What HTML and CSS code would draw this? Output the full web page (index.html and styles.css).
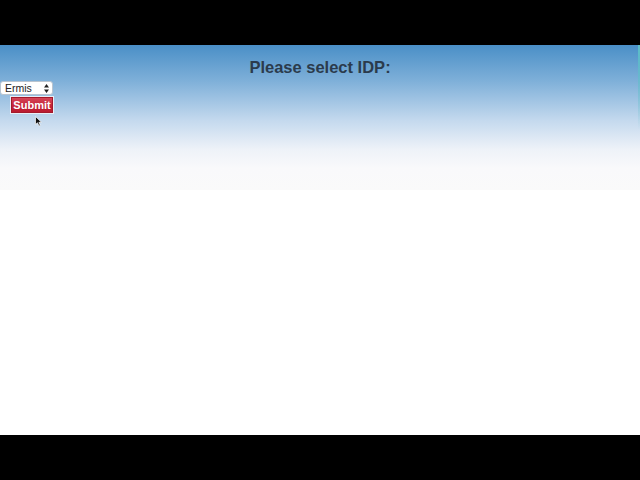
FILE: index.html
```html
<!DOCTYPE html>
<html>
<head>
<meta charset="utf-8">
<link rel="stylesheet" href="styles.css">
</head>
<body>
<div class="screen">
  <div class="bar"></div>
  <div class="page">
    <div class="header">
      <h1 class="title">Please select IDP:</h1>
      <form class="idp-form">
        <div class="select">
          <span class="select-text">Ermis</span>
          <svg class="select-arrows" width="5" height="9" viewBox="0 0 5 9"><path d="M2.5 0 L5 3.5 L0 3.5 Z M2.5 9 L5 5.5 L0 5.5 Z" fill="#222"/></svg>
        </div>
        <button type="button" class="submit">Submit</button>
      </form>
      <svg class="cursor" width="8" height="11" viewBox="0 0 8 11"><path d="M0.5 0.5 L0.5 8.5 L2.5 6.8 L4 10 L5.3 9.4 L3.9 6.3 L6.5 6.3 Z" fill="#111" stroke="#fff" stroke-width="0.7"/></svg>
      <div class="edge"></div>
    </div>
  </div>
  <div class="bar"></div>
</div>
</body>
</html>
```
FILE: styles.css
```css
html, body {
  margin: 0;
  padding: 0;
  background: #000;
}
.screen {
  width: 640px;
  height: 480px;
  display: flex;
  flex-direction: column;
}
.bar {
  height: 45px;
  background: #000;
}
.page {
  height: 390px;
  background: #fff;
}
.header {
  position: relative;
  height: 145px;
  background: linear-gradient(to bottom, #4a8fc7 0%, #7fb0d9 25%, #c4d9ee 52%, #eef2f8 72%, #f9f9fb 85%, #fafafa 100%);
  padding-top: 12px;
  box-sizing: border-box;
}
.title {
  margin: 0;
  text-align: center;
  font-family: "Liberation Sans", Arial, sans-serif;
  font-size: 16.5px;
  font-weight: bold;
  color: #2b3b4c;
  line-height: 20px;
}
.idp-form {
  margin-top: 4px;
  display: flex;
  flex-direction: column;
  align-items: flex-start;
}
.select {
  width: 53px;
  height: 14px;
  box-sizing: border-box;
  background: #fff;
  border-radius: 3px;
  border: 1px solid #b9c4cf;
  display: flex;
  align-items: center;
  justify-content: space-between;
  padding: 0 3px 0 4px;
}
.select-text {
  font-family: "Liberation Sans", Arial, sans-serif;
  font-size: 10.5px;
  color: #222;
  line-height: 12px;
}
.submit {
  margin: 1px 0 0 10px;
  width: 44px;
  height: 18px;
  padding: 0;
  border: 1px solid #e8eef5;
  outline: 1px solid #a31a2c;
  outline-offset: -2px;
  background: linear-gradient(to bottom, #d84a5c 0%, #c42338 55%, #b81a2f 100%);
  color: #fff;
  font-family: "Liberation Sans", Arial, sans-serif;
  font-size: 11px;
  font-weight: bold;
  line-height: 14px;
}
.cursor {
  position: absolute;
  left: 35px;
  top: 71px;
}
.edge {
  position: absolute;
  right: 0;
  top: 0;
  width: 2px;
  height: 85px;
  background: linear-gradient(to bottom, #5ec0c8, rgba(120, 210, 200, 0));
}
```
